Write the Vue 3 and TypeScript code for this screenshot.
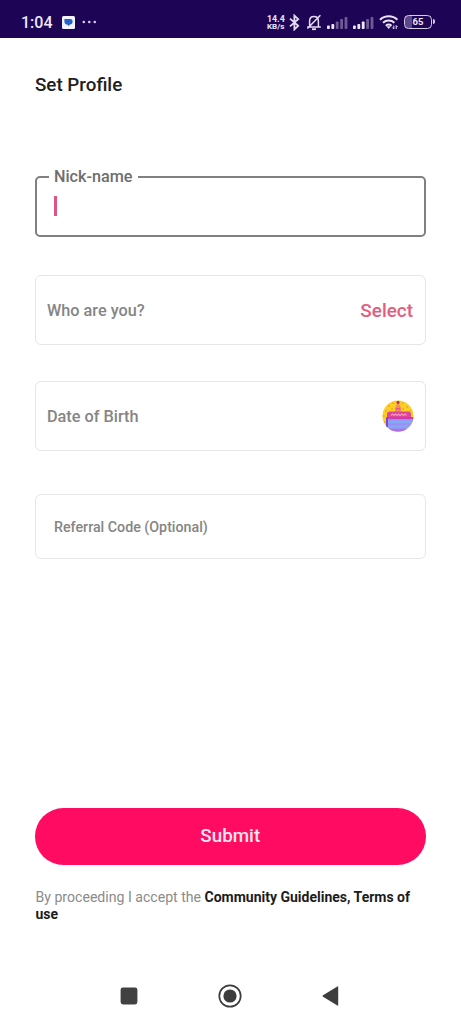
<script setup lang="ts">
import { ref } from 'vue'

interface SignalBar {
  x: number
  h: number
  active: boolean
}

const makeBars = (activeCount: number): SignalBar[] =>
  [3.5, 5, 7.5, 10, 12].map((h, i) => ({ x: i * 4.4, h, active: i < activeCount }))

const signals: SignalBar[][] = [makeBars(2), makeBars(3)]
const time = ref('1:04')
const battery = ref(65)
</script>

<template>
  <div class="screen">
    <header class="status">
      <span class="time">{{ time }}</span>
      <svg class="message" width="13" height="13" viewBox="0 0 13 13">
        <rect width="13" height="13" rx="1.5" fill="#f3f3ff" />
        <path d="M4.7 3h3.6q2.3 0 2.3 2.6 0 2.8-2.6 3L6.8 10 5.3 8.6Q2.5 8.3 2.4 5.4V3z" fill="#2462c8" />
      </svg>
      <svg class="more" width="15" height="4" viewBox="0 0 15 4" fill="#d9cfee">
        <circle cx="1.8" cy="2" r="1.3" />
        <circle cx="7.3" cy="2" r="1.3" />
        <circle cx="12.8" cy="2" r="1.3" />
      </svg>
      <div class="speed"><span class="rate">14.4</span><span>KB/s</span></div>
      <svg class="bluetooth" width="11" height="17" viewBox="0 0 11 17" fill="none" stroke="#e5dcf3" stroke-width="1.8">
        <path d="M1 4.6 9.2 11.8 5.4 15.4V1.6L9.2 5.2 1 12.4" />
      </svg>
      <svg class="bell" width="16" height="17" viewBox="0 0 16 17" fill="none" stroke="#e5dcf3" stroke-width="1.5">
        <path d="M3.6 12.7V7.2C3.6 4.2 5.4 2.6 8 2.6s4.4 1.6 4.4 4.6v5.5M1.2 12.9h13.6M14.4 1.2 1.4 14.6" />
        <path d="M6 15.2h4" stroke-width="1.8" />
      </svg>
      <svg
        v-for="(bars, n) in signals"
        :key="n"
        class="signal"
        width="21"
        height="13"
        viewBox="0 0 21 13"
      >
        <rect
          v-for="bar in bars"
          :key="bar.x"
          :x="bar.x"
          :y="13 - bar.h"
          width="2.8"
          :height="bar.h"
          rx="0.8"
          :fill="bar.active ? '#eee7f8' : '#6e5a94'"
        />
      </svg>
      <svg class="wifi" width="20" height="16" viewBox="0 0 20 16" fill="none" stroke="#e9e1f6" stroke-width="2">
        <path d="M1 5.7a12.7 12.7 0 0 1 17.4 0M4 8.8a8.4 8.4 0 0 1 11.4 0M6.8 11.7a4.5 4.5 0 0 1 5.8 0" />
        <path d="M7.4 12.2h4.6L9.7 15z" fill="#e9e1f6" stroke="none" />
        <path d="M14.8 11.6V15M13.4 13.6l1.4 1.4M17.2 15v-3.4M18.6 13l-1.4-1.4" stroke-width="1" />
      </svg>
      <div class="battery"><span>{{ battery }}</span></div>
    </header>

    <main class="content">
      <h1 class="title">Set Profile</h1>

      <div class="field nickname">
        <label class="floating">Nick-name</label>
        <span class="caret"></span>
      </div>

      <div class="field row who">
        <span class="label">Who are you?</span>
        <span class="select">Select</span>
      </div>

      <div class="field row birth">
        <span class="label">Date of Birth</span>
        <svg class="cake" width="32" height="32" viewBox="0 0 32 32">
          <defs>
            <clipPath id="cake-disc"><circle cx="16" cy="16" r="15.5" /></clipPath>
          </defs>
          <g clip-path="url(#cake-disc)">
            <rect width="32" height="32" fill="#fbcf23" />
            <g fill="#f5a535">
              <circle cx="7" cy="6" r="1" /><circle cx="11" cy="3" r="1" />
              <circle cx="4" cy="11" r="1" /><circle cx="10" cy="9" r="1" />
              <circle cx="21" cy="3" r="1" /><circle cx="25" cy="7" r="1" />
              <circle cx="28" cy="11" r="1" /><circle cx="21" cy="9" r="1" />
              <circle cx="3" cy="22" r="1" /><circle cx="1.8" cy="16" r="1" />
            </g>
            <path d="M13 12V8l2-4h2l2 4v4z" fill="#f28a62" />
            <path d="M14 8h4v1.5h-4z" fill="#e5578a" />
            <circle cx="16" cy="2.4" r="1.6" fill="#ba3558" />
            <path d="M5 14q0-2.5 3-2.5h18q3 0 3 2.5v6H5z" fill="#e0439c" />
            <path d="m9 15.5 1.5-1.5 1.5 1.5 1.5-1.5 1.5 1.5 1.5-1.5 1.5 1.5 2-1.5 1.5 1.5 1.5-1.5 1.5 1.5" fill="none" stroke="#f79cb9" stroke-width="1.1" />
            <path d="M4 17h28v3H4z" fill="#c93db0" />
            <rect x="4" y="19" width="28" height="13" fill="#a08cf3" />
            <path d="M4 20.5h28v2.4H4zm0 5h28v2H4z" fill="#82aaf5" />
            <path d="M4 18h2v9H4z" fill="#754bd5" />
            <path d="M5 29h27v3H5z" fill="#b06fe2" />
          </g>
        </svg>
      </div>

      <div class="field row referral">
        <span class="hint">Referral Code (Optional)</span>
      </div>

      <button class="submit" type="button">Submit</button>

      <p class="terms">
        <span class="intro">By proceeding I accept the </span><strong>Community Guidelines, Terms of<br />use</strong>
      </p>
    </main>

    <nav class="navigation">
      <svg width="18" height="18" viewBox="0 0 18 18"><rect x=".6" y=".6" width="16.8" height="16.8" rx="2.4" fill="#414141" /></svg>
      <svg width="24" height="24" viewBox="0 0 24 24">
        <circle cx="12" cy="12" r="10.7" fill="none" stroke="#3d3d3d" stroke-width="1.7" />
        <circle cx="12" cy="12" r="6.6" fill="#3d3d3d" />
      </svg>
      <svg width="18" height="20" viewBox="0 0 18 20"><path d="M16.2.7v18.6q0 .8-.8.3L1 10.7q-.9-.7 0-1.4L15.4.4q.8-.5.8.3z" fill="#3d3d3d" /></svg>
    </nav>
  </div>
</template>

<style scoped>
.screen {
  width: 461px;
  height: 1024px;
  display: flex;
  flex-direction: column;
  overflow: hidden;
  background: #fff;
  font-family: Roboto, "Liberation Sans", sans-serif;
}

.status {
  height: 38px;
  flex: none;
  display: flex;
  align-items: center;
  box-sizing: border-box;
  padding: 6px 29px 0 21px;
  background: #1e0455;
  color: #efe6fa;
}

.time {
  width: 41px;
  font-size: 16px;
  line-height: 20px;
  font-weight: 500;
  padding-top: 2px;
}

.message { flex: none; }
.more { margin-left: 7px; }

.speed {
  width: 19px;
  margin-left: auto;
  display: flex;
  flex-direction: column;
  padding-top: 1px;
  font-size: 8px;
  line-height: 8px;
  font-weight: 700;
  white-space: nowrap;
}

.rate { font-size: 8.8px; }
.bluetooth { margin-left: 3px; }
.bell { margin-left: 6px; }
.signal { margin: 1px 0 0 5px; }
.wifi { margin-left: 5px; }

.battery {
  position: relative;
  width: 28px;
  height: 14px;
  margin-left: 5px;
  box-sizing: border-box;
  border: 1.5px solid #d8cde9;
  border-radius: 4.5px;
  display: flex;
  align-items: center;
  justify-content: center;
  font-size: 9.5px;
  font-weight: 700;
  line-height: 10px;
  background: linear-gradient(90deg, #5d4889 7px, transparent 7px);
}

.battery::after {
  content: "";
  position: absolute;
  right: -4px;
  top: 3px;
  width: 2px;
  height: 5px;
  border-radius: 0 2px 2px 0;
  background: #d8cde9;
}

.content {
  height: 930px;
  flex: none;
  display: flex;
  flex-direction: column;
  box-sizing: border-box;
  padding: 35px 35px 0;
}

.title {
  margin: 0 0 79px;
  font-size: 18.8px;
  line-height: 24px;
  font-weight: 500;
  height: 24px;
  color: #202020;
}

.field {
  width: 390.5px;
  box-sizing: border-box;
  border: 1px solid #e6e6e6;
  border-radius: 6px;
  flex: none;
}

.nickname {
  position: relative;
  height: 61px;
  border: 2.5px solid #808080;
  border-radius: 5px;
}

.floating {
  position: absolute;
  left: 12px;
  top: -12px;
  padding: 0 5px;
  background: #fff;
  color: #6e6e6e;
  font-size: 16.2px;
  line-height: 21px;
  font-weight: 500;
  white-space: nowrap;
}

.caret {
  display: block;
  width: 2.5px;
  height: 20px;
  margin: 18px 0 0 17px;
  background: #e05480;
}

.row {
  display: flex;
  align-items: center;
  justify-content: space-between;
}

.who { height: 70px; margin-top: 38px; padding: 0 11.5px 0 11px; }
.birth { height: 70px; margin-top: 36px; padding: 0 11px; }
.referral { height: 65px; margin-top: 43px; padding-left: 18px; }

.label {
  font-size: 16.25px;
  font-weight: 500;
  color: #858585;
}

.select {
  font-size: 18.9px;
  font-weight: 500;
  color: #e35d7d;
}

.hint {
  font-size: 14.25px;
  font-weight: 500;
  color: #858585;
}

.submit {
  width: 390.5px;
  height: 57px;
  flex: none;
  margin: 249px 0 0;
  padding: 0;
  border: 0;
  border-radius: 29px;
  background: #ff0b61;
  color: #ffe5ef;
  font: 500 18.8px/57px Roboto, "Liberation Sans", sans-serif;
}

.terms {
  margin: 24px 0 0 0.5px;
  font-size: 14.1px;
  line-height: 16.5px;
  white-space: nowrap;
  color: #1c1c1c;
}

.intro { color: #8b8b8b; }
.terms strong { font-weight: 700; font-size: 14px; }

.navigation {
  display: flex;
  align-items: center;
  justify-content: space-between;
  height: 56px;
  padding: 0 121px 0 120px;
}
</style>

<style>
body {
  margin: 0;
  background: #fff;
}
</style>
